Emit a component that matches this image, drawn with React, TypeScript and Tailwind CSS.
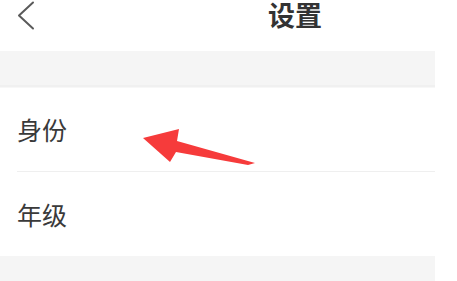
import React from 'react'

const font = { fontFamily: '"Noto Sans CJK SC", "Noto Sans", sans-serif' }

function Row({ label, last }: { label: string; last?: boolean }) {
  return (
    <div className="h-[84px] pl-[17px] bg-white">
      <div className={`h-full flex items-center ${last ? '' : 'border-b border-[#efefef]'}`}>
        <span className="text-[25px] leading-none text-[#3a3a3a]">{label}</span>
      </div>
    </div>
  )
}

export default function App() {
  return (
    <div className="relative w-[457px] h-[281px] bg-white overflow-hidden" style={font}>
      <div className="w-[435px] h-full flex flex-col">
        <header className="h-[51px] relative">
          <svg className="absolute left-[15px] top-0" width="24" height="32" viewBox="0 0 24 32" fill="none">
            <path d="M18 2.5 L4 15.5 L18 28.5" stroke="#5a5a5a" strokeWidth="2" strokeLinecap="round" strokeLinejoin="round" />
          </svg>
          <h1 className="absolute left-[268px] top-0 text-[27px] font-bold text-[#333] leading-[30px] whitespace-nowrap">设置</h1>
        </header>
        <div className="h-[34px] bg-[#f5f5f5]" />
        <div className="h-[3px] bg-[#f0f0f0] border-b border-[#f7f7f7]" />
        <Row label="身份" />
        <Row label="年级" last />
        <div className="flex-1 bg-[#f5f5f5]" />
      </div>
      <svg className="absolute left-0 top-0 pointer-events-none" width="457" height="281" viewBox="0 0 457 281">
        <polygon points="143,138 179,129 177,141 255,163 248,165 176,152 170,162" fill="#f63b3b" />
      </svg>
    </div>
  )
}
